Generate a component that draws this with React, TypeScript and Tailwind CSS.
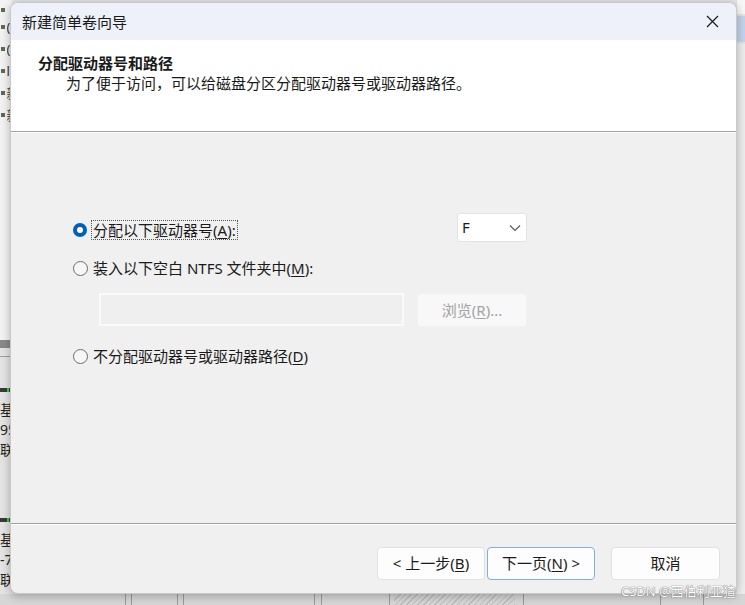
import React from "react";

const FONT = {
  fontFamily: '"Noto Sans", "Noto Sans CJK SC", sans-serif',
};

function Key({ k }: { k: string }) {
  return (
    <>
      (<span className="underline underline-offset-2 decoration-1">{k}</span>)
    </>
  );
}

function Radio({ checked }: { checked?: boolean }) {
  if (checked) {
    return (
      <span className="flex h-[14px] w-[14px] shrink-0 items-center justify-center rounded-full bg-[#005fb8]">
        <span className="h-[6px] w-[6px] rounded-full bg-white" />
      </span>
    );
  }
  return (
    <span className="h-[15px] w-[15px] shrink-0 rounded-full border border-[#6b6b6b] bg-[#f7f7f7]" />
  );
}

function Backdrop() {
  return (
    <div className="absolute inset-0 bg-[#e4e4e4]">
      {/* list column on the left */}
      <div className="absolute left-0 top-0 h-[340px] w-[12px] bg-[#f3f3f3]">
        <div className="flex flex-col gap-[8px] pl-[1px] pt-[8px] text-[13px] leading-[14px] text-[#333]">
          {["", "(", "(", "l", "新", "新"].map((c, i) => (
            <div key={i} className="flex items-center gap-[2px]">
              <span className="h-[4px] w-[4px] bg-[#5b6b5b]" />
              <span className="w-[6px] overflow-hidden">{c}</span>
            </div>
          ))}
        </div>
      </div>
      <div className="absolute left-0 top-[340px] h-[8px] w-[12px] bg-[#8a8a8a]" />
      <div className="absolute left-0 top-[356px] h-[1px] w-[12px] bg-[#a0a0a0]" />
      {/* disk rows */}
      {[388, 518].map((y, i) => (
        <div key={y} className="absolute left-0 w-[12px]" style={{ top: y }}>
          <div className="h-[4px] w-[12px] bg-[#3a3a3a]">
            <span className="ml-[7px] block h-[4px] w-[2px] bg-[#37d23a]" />
          </div>
          <div className="flex flex-col pt-[8px] text-[14px] leading-[20px] text-[#222]">
            <span className="w-[10px] overflow-hidden">基</span>
            <span className="w-[10px] overflow-hidden">{i === 0 ? "95" : "-7"}</span>
            <span className="w-[10px] overflow-hidden">联</span>
          </div>
        </div>
      ))}
      {/* right edge strip */}
      <div className="absolute right-0 top-0 h-[14px] w-[8px] bg-[#f7f7f7]" />
      <div className="absolute right-0 top-[16px] h-[26px] w-[8px] bg-[#c3d3ea]" />
      <div className="absolute right-0 top-[44px] h-[560px] w-[8px] bg-[#ededed]" />
      {/* bottom strip */}
      <div className="absolute bottom-0 left-0 h-[11px] w-full bg-[#d6d6d6]">
        {[125, 131, 177, 183, 314, 321, 389, 523, 660, 703].map((x) => (
          <span key={x} className="absolute top-0 h-full w-[1px] bg-[#9a9a9a]" style={{ left: x }} />
        ))}
        <span className="absolute top-0 h-full w-[121px] bg-[repeating-linear-gradient(135deg,#bdbdbd_0,#bdbdbd_1px,#d6d6d6_1px,#d6d6d6_4px)]" style={{ left: 394 }} />
      </div>
    </div>
  );
}

export default function App() {
  return (
    <div className="relative h-[605px] w-[745px] overflow-hidden" style={FONT}>
      <Backdrop />

      {/* wizard window */}
      <div className="absolute left-[10px] top-[2px] flex h-[592px] w-[727px] flex-col overflow-hidden rounded-[8px] border border-[#c9c9c9] bg-[#f0f0f0] text-[15px] text-[#1a1a1a] shadow-[0_2px_10px_rgba(0,0,0,0.28)]">
        {/* title bar */}
        <div className="flex h-[37px] shrink-0 items-center justify-between bg-[#eef1f9] pl-[11px] pr-[17px]">
          <span className="leading-[20px]">新建简单卷向导</span>
          <svg width="13" height="13" viewBox="0 0 13 13" className="text-[#1a1a1a]">
            <path d="M1 1 L12 12 M12 1 L1 12" stroke="currentColor" strokeWidth="1.2" fill="none" />
          </svg>
        </div>

        {/* header */}
        <div className="flex h-[91px] shrink-0 flex-col bg-white pt-[13px]">
          <div className="pl-[27px] font-bold leading-[20px]">分配驱动器号和路径</div>
          <div className="pl-[55px] leading-[20px]">为了便于访问，可以给磁盘分区分配驱动器号或驱动器路径。</div>
        </div>
        <div className="h-[1px] shrink-0 bg-[#a0a0a0]" />
        <div className="h-[1px] shrink-0 bg-white" />

        {/* body */}
        <div className="flex h-[390px] shrink-0 flex-col pl-[62px] pt-[80px]">
          <div className="flex h-[29px] items-start">
            <div className="mt-[7px] flex h-[20px] w-[384px] items-center gap-[4px]">
              <Radio checked />
              <span className="border border-dotted border-[#555] px-[1px] leading-[18px]">
                分配以下驱动器号<Key k="A" />:
              </span>
            </div>
            <div className="flex h-[29px] w-[70px] items-center justify-between rounded-[3px] border border-[#e3e3e3] bg-white pl-[4px] pr-[5px]">
              <span>F</span>
              <svg width="12" height="8" viewBox="0 0 12 8">
                <path d="M1 1.5 L6 6.5 L11 1.5" stroke="#555" strokeWidth="1.1" fill="none" />
              </svg>
            </div>
          </div>

          <div className="mt-[16px] flex h-[20px] items-center gap-[5px]">
            <Radio />
            <span className="leading-[20px]">
              装入以下空白 NTFS 文件夹中<Key k="M" />:
            </span>
          </div>

          <div className="mt-[15px] flex items-start gap-[14px] pl-[26px]">
            <div className="h-[33px] w-[305px] border-2 border-[#fafafa] bg-[#efefef]" />
            <div className="mt-[1px] flex h-[32px] w-[108px] items-center justify-center rounded-[3px] bg-[#f8f8f8] text-[#a3a3a3]">
              <span>
                浏览<Key k="R" />...
              </span>
            </div>
          </div>

          <div className="mt-[20px] flex h-[20px] items-center gap-[5px]">
            <Radio />
            <span className="leading-[20px]">
              不分配驱动器号或驱动器路径<Key k="D" />
            </span>
          </div>
        </div>

        <div className="h-[1px] shrink-0 bg-[#a0a0a0]" />
        <div className="h-[1px] shrink-0 bg-white" />

        {/* footer */}
        <div className="flex flex-1 items-start justify-end pr-[16px] pt-[22px]">
          <button className="flex h-[33px] w-[108px] items-center justify-center rounded-[4px] border border-[#e2e2e2] bg-[#fdfdfd]">
            <span>
              &lt; 上一步<Key k="B" />
            </span>
          </button>
          <button className="ml-[2px] flex h-[33px] w-[108px] items-center justify-center rounded-[4px] border border-[#7fb0e4] bg-[#fdfdfd]">
            <span>
              下一页<Key k="N" /> &gt;
            </span>
          </button>
          <button className="ml-[16px] flex h-[33px] w-[109px] items-center justify-center rounded-[4px] border border-[#e2e2e2] bg-[#fdfdfd]">
            取消
          </button>
        </div>
      </div>

      {/* watermark */}
      <div className="absolute left-[621px] top-[582px] text-[13px] leading-[18px] text-white [text-shadow:0_0_1px_#666,0_0_1px_#666]">
        CSDN @西伯利亚猹
      </div>
    </div>
  );
}
